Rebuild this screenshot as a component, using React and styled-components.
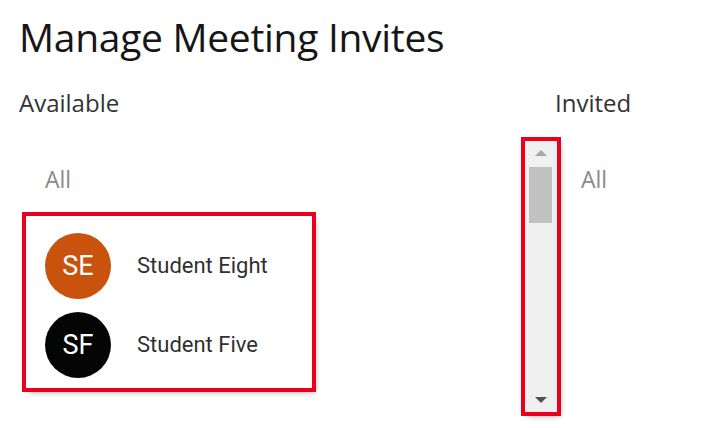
import styled, { createGlobalStyle } from "styled-components";

const GlobalStyle = createGlobalStyle`
  body {
    margin: 0;
    background: #ffffff;
  }
`;

const Page = styled.div`
  width: 722px;
  height: 428px;
  padding: 13px 0 0 19px;
  box-sizing: border-box;
  overflow: hidden;
  font-family: "Open Sans", "Noto Sans", sans-serif;
`;

const Title = styled.h1`
  margin: 0;
  font-size: 39px;
  line-height: 48px;
  font-weight: 400;
  color: #161616;
  letter-spacing: -0.3px;
`;

const Columns = styled.div`
  display: grid;
  grid-template-columns: 506px 32px 1fr;
  grid-template-rows: auto 1fr;
  margin-top: 27px;
`;

const Label = styled.div`
  grid-column: ${(p) => p.$col};
  font-size: 24px;
  line-height: 30px;
  color: #333333;
  margin-left: ${(p) => p.$offset || 0}px;
`;

const ListArea = styled.div`
  grid-column: ${(p) => p.$col};
  margin-top: 23px;
`;

const AllRow = styled.div`
  font-size: 23px;
  line-height: 30px;
  color: #8a8a8a;
  padding-left: ${(p) => p.$indent}px;
  margin: 23px 0 22px;
`;

const Highlight = styled.div`
  outline: 4px solid #e8001c;
  box-shadow: 3px 4px 6px rgba(0, 0, 0, 0.35);
`;

const Group = styled(Highlight)`
  margin-left: 7px;
  width: 286px;
  padding: 10px 0 4px;
  box-sizing: border-box;
  background: #ffffff;
`;

const Person = styled.div`
  display: flex;
  align-items: center;
  height: 79px;
  padding-left: 19px;
  gap: 26px;
`;

const Avatar = styled.div`
  width: 66px;
  height: 66px;
  border-radius: 50%;
  background: ${(p) => p.$color};
  color: #ffffff;
  display: flex;
  align-items: center;
  justify-content: center;
  font-family: Roboto, "Liberation Sans", sans-serif;
  font-size: 27px;
  flex-shrink: 0;
`;

const Name = styled.span`
  font-family: Roboto, "Liberation Sans", sans-serif;
  font-size: 22px;
  color: #303030;
`;

const Track = styled(Highlight)`
  grid-column: 2;
  margin-top: 23px;
  height: 271px;
  background: #f0f0f0;
  display: flex;
  flex-direction: column;
  align-items: center;
`;

const Arrow = styled.div`
  width: 0;
  height: 0;
  border-left: 6px solid transparent;
  border-right: 6px solid transparent;
  ${(p) =>
    p.$down
      ? `border-top: 6px solid #505050; margin-top: auto; margin-bottom: 9px;`
      : `border-bottom: 6px solid #a6a6a6; margin-top: 9px;`}
`;

const Thumb = styled.div`
  width: 23px;
  height: 56px;
  margin: 11px 1px 0 0;
  background: #c1c1c1;
`;

const people = [
  { initials: "SE", name: "Student Eight", color: "#c9520c" },
  { initials: "SF", name: "Student Five", color: "#050505" },
];

const App = () => {
  return (
    <>
      <GlobalStyle />
      <Page>
        <Title>Manage Meeting Invites</Title>
        <Columns>
          <Label $col={1}>Available</Label>
          <Label $col={3} $offset={-2}>
            Invited
          </Label>
          <ListArea $col={1}>
            <AllRow $indent={26}>All</AllRow>
            <Group>
              {people.map((p) => (
                <Person key={p.initials}>
                  <Avatar $color={p.color}>{p.initials}</Avatar>
                  <Name>{p.name}</Name>
                </Person>
              ))}
            </Group>
          </ListArea>
          <Track>
            <Arrow />
            <Thumb />
            <Arrow $down />
          </Track>
          <ListArea $col={3}>
            <AllRow $indent={24}>All</AllRow>
          </ListArea>
        </Columns>
      </Page>
    </>
  );
};

export default App;
